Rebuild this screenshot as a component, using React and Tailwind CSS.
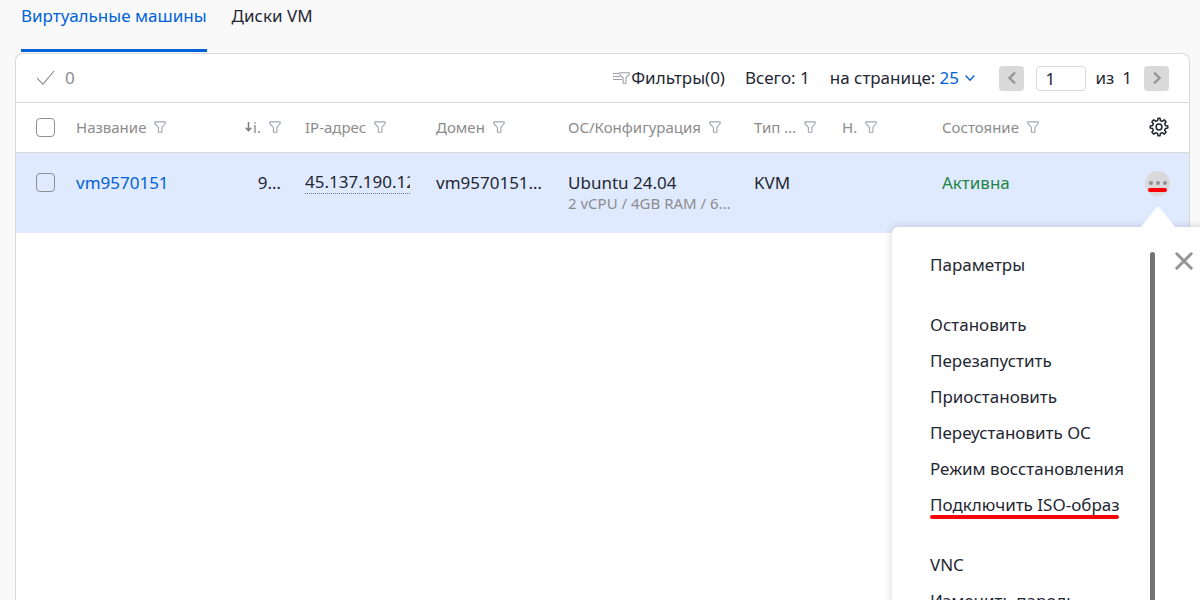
import React, { useState } from "react";

const columns = [
  { key: "name", label: "Название", width: "w-[167px]" },
  { key: "id", label: "i.", width: "w-[62px]", sorted: true },
  { key: "ip", label: "IP-адрес", width: "w-[131px]" },
  { key: "domain", label: "Домен", width: "w-[132px]" },
  { key: "os", label: "ОС/Конфигурация", width: "w-[186px]" },
  { key: "type", label: "Тип …", width: "w-[88px]" },
  { key: "node", label: "Н.", width: "w-[100px]" },
  { key: "state", label: "Состояние", width: "" },
];

const menuGroups = [
  ["Параметры"],
  ["Остановить", "Перезапустить", "Приостановить", "Переустановить ОС", "Режим восстановления", "Подключить ISO-образ"],
  ["VNC", "Изменить пароль"],
];

const FunnelIcon = () => (
  <svg className="w-3 h-3 shrink-0" viewBox="0 0 12 12" fill="none" stroke="#a3a5b4" strokeWidth="1.1" aria-hidden="true">
    <path d="M.8.9h10.4v1.6L7.9 6.3v4.9H4.4V6.3L.8 2.5z" strokeLinejoin="round" />
  </svg>
);

const FilterListIcon = () => (
  <svg className="w-[17px] h-3 shrink-0" viewBox="0 0 17 12" fill="none" stroke="#a0a0a4" aria-hidden="true">
    <path d="M0 1.5h6M0 4.5h7M0 7.5h9" />
    <path d="M6 .8h10.3v1.4L12.9 6v5.3h-2.8V6L6.4 2.2" strokeWidth="1.1" />
  </svg>
);

const GearIcon = () => (
  <svg className="w-5 h-5" viewBox="0 0 20 20" fill="none" stroke="#1f2733" strokeWidth="1.5" strokeLinejoin="round" aria-hidden="true">
    <path d="M8.6 3.6 9 1.2h2l.4 2.4 1.8.7 2-1.4 1.9 1.9-1.4 2 .7 1.8 2.4.4v2l-2.4.4-.7 1.8 1.4 2-1.9 1.9-2-1.4-1.8.7-.4 2.4H9l-.4-2.4-1.8-.7-2 1.4-1.9-1.9 1.4-2-.7-1.8-2.4-.4V9l2.4-.4.7-1.8-1.4-2 1.9-1.9 2 1.4z" />
    <circle cx="10" cy="10" r="2.9" />
  </svg>
);

const Chevron = ({ left }) => (
  <svg className="w-3 h-3.5" viewBox="0 0 12 14" fill="none" stroke="#969696" strokeWidth="2.4" aria-hidden="true">
    <path d={left ? "M9 1.5 3.5 7 9 12.5" : "M3 1.5 8.5 7 3 12.5"} />
  </svg>
);

const Checkbox = ({ label }) => (
  <input
    type="checkbox"
    aria-label={label}
    className="block w-[19px] h-[19px] appearance-none rounded border border-[#8f9096] checked:bg-[#0062d9]"
  />
);

const ActionsMenu = ({ onClose }) => (
  <div className="absolute top-full -right-[142px] z-10 mt-[31px] w-[420px] rounded-md bg-white shadow-[0_0_8px_rgba(0,0,0,0.18)]">
    <svg className="absolute -top-[21px] left-[248px] w-9 h-[22px]" viewBox="0 0 36 22" fill="#fff" aria-hidden="true">
      <path d="M0 22 16.5 1.5q1.5-1.5 3 0L36 22z" />
    </svg>
    <div className="flex pt-[25px]">
      <div className="-mt-[5px] flex w-[258px] flex-col gap-6 pl-[38px]">
        {menuGroups.map(group => (
          <div key={group[0]} className="flex flex-col items-start">
            {group.map(item => (
              <button key={item} className="relative h-9 whitespace-nowrap text-left">
                {item}
                {item === "Подключить ISO-образ" && (
                  <span className="absolute inset-x-0 bottom-1 h-1 rounded-full bg-[#fb0007]" />
                )}
              </button>
            ))}
          </div>
        ))}
      </div>
      <div className="w-[5px] rounded-full bg-[#737373]" />
      <button aria-label="Закрыть" onClick={onClose} className="ml-5 h-[18px]">
        <svg className="w-[18px] h-[18px]" viewBox="0 0 18 18" stroke="#949494" strokeWidth="3" strokeLinecap="round" aria-hidden="true">
          <path d="m1.8 1.8 14.4 14.4m0-14.4L1.8 16.2" />
        </svg>
      </button>
    </div>
  </div>
);

export default function App() {
  const [menuOpen, setMenuOpen] = useState(true);
  const [page, setPage] = useState("1");

  return (
    <div className="flex h-screen flex-col overflow-hidden bg-[#f9f9f9] font-['Noto_Sans',sans-serif] text-[17px] leading-6 text-[#1f2733]">
      {/* Tabs */}
      <nav className="flex gap-[25px] px-[21px]">
        <a href="#vm" className="h-[52px] border-b-3 border-[#0062d9] pt-1 text-[#0062d9]">Виртуальные машины</a>
        <a href="#disks" className="h-[52px] pt-1">Диски VM</a>
      </nav>

      <main className="ml-[15px] mr-[10px] mt-px flex-1 rounded-t-lg border border-b-0 border-[#d9d9d9] bg-white">
        {/* Toolbar */}
        <div className="flex h-[49px] items-center border-b border-[#d9d9d9] px-5">
          <svg className="w-[19px] h-4" viewBox="0 0 19 16" fill="none" stroke="#8c8c8c" strokeWidth="1.1" aria-hidden="true">
            <path d="m1 8.2 6 6L18 1" />
          </svg>
          <span className="ml-2.5 text-[#8c8c8c]">0</span>
          <button className="ml-auto flex items-center gap-px">
            <FilterListIcon />
            Фильтры(0)
          </button>
          <span className="ml-5">Всего: 1</span>
          <label htmlFor="per-page" className="ml-5">на странице:</label>
          <div className="relative ml-1 flex items-center text-[#0062d9]">
            <select id="per-page" defaultValue="25" className="w-9 appearance-none bg-transparent outline-none">
              <option>25</option>
              <option>50</option>
              <option>100</option>
            </select>
            <svg className="pointer-events-none absolute right-0 w-2.5 h-2" viewBox="0 0 10 8" fill="none" stroke="currentColor" strokeWidth="1.3" aria-hidden="true">
              <path d="m.6 1.5 4.4 4.7 4.4-4.7" />
            </svg>
          </div>
          <button aria-label="Предыдущая страница" className="ml-6 flex h-[25px] w-[25px] items-center justify-center rounded bg-[#d9d9d9]">
            <Chevron left />
          </button>
          <input
            aria-label="Страница"
            value={page}
            onChange={e => setPage(e.target.value)}
            className="ml-3 h-[25px] w-[50px] rounded border border-[#d9d9d9] px-2 outline-none"
          />
          <span className="ml-[9px]">из</span>
          <span className="ml-2">1</span>
          <button aria-label="Следующая страница" className="ml-3 flex h-[25px] w-[25px] items-center justify-center rounded bg-[#d9d9d9]">
            <Chevron />
          </button>
        </div>

        {/* Table */}
        <table className="w-full table-fixed text-left">
          <thead>
            <tr className="h-[49px] border-b border-[#d9d9d9] text-[15px] text-[#8c8c8c]">
              <th className="w-12 pl-5"><Checkbox label="Выбрать все" /></th>
              {columns.map(col => (
                <th key={col.key} className={`${col.width} px-3 font-normal whitespace-nowrap`}>
                  <div className={col.sorted ? "flex items-center justify-end gap-2" : "flex items-center gap-2"}>
                    <span className="flex items-center gap-px">
                      {col.sorted && (
                        <svg className="w-[7px] h-2.5" viewBox="0 0 7 10" fill="none" stroke="#7a7a7a" strokeWidth="1.5" aria-hidden="true">
                          <path d="M3.5 0v8.5M.8 5.8l2.7 2.9 2.7-2.9" />
                        </svg>
                      )}
                      {col.label}
                    </span>
                    <FunnelIcon />
                  </div>
                </th>
              ))}
              <th className="w-[52px]">
                <button aria-label="Настройки таблицы" className="ml-3 block"><GearIcon /></button>
              </th>
            </tr>
          </thead>
          <tbody>
            <tr className="h-[81px] bg-[#e0eaff] align-top whitespace-nowrap">
              <td className="pl-5 pt-5"><Checkbox label="Выбрать vm9570151" /></td>
              <td className="px-3 pt-[18px]"><a href="#vm9570151" className="text-[#0062d9]">vm9570151</a></td>
              <td className="px-3 pt-[18px] text-right">9…</td>
              <td className="px-3 pt-[18px]">
                <div className="w-[105px] overflow-hidden border-b border-dotted border-[#6b7280] leading-[22px]">45.137.190.12</div>
              </td>
              <td className="pl-3 pt-[18px]">vm9570151…</td>
              <td className="pl-3 pt-[18px]">
                <div className="leading-6">Ubuntu 24.04</div>
                <div className="text-[15px] leading-4 text-[#8c8c8c]">2 vCPU / 4GB RAM / 6…</div>
              </td>
              <td className="px-3 pt-[18px]">KVM</td>
              <td />
              <td className="px-3 pt-[18px] text-[#1e8545]">Активна</td>
              <td className="pt-[18px]">
                <div className="relative ml-2 w-[25px]">
                  <button
                    aria-label="Действия"
                    onClick={() => setMenuOpen(o => !o)}
                    className="relative flex h-[25px] w-[25px] items-center justify-center gap-[3px] rounded-full bg-[#d9d9d9]"
                  >
                    <span className="h-1 w-1 rounded-full bg-[#8f8f96]" />
                    <span className="h-1 w-1 rounded-full bg-[#8f8f96]" />
                    <span className="h-1 w-1 rounded-full bg-[#8f8f96]" />
                    <span className="absolute inset-x-[3px] bottom-1 h-1 rounded-full bg-[#fb0007]" />
                  </button>
                  {menuOpen && <ActionsMenu onClose={() => setMenuOpen(false)} />}
                </div>
              </td>
            </tr>
          </tbody>
        </table>
      </main>
    </div>
  );
}
